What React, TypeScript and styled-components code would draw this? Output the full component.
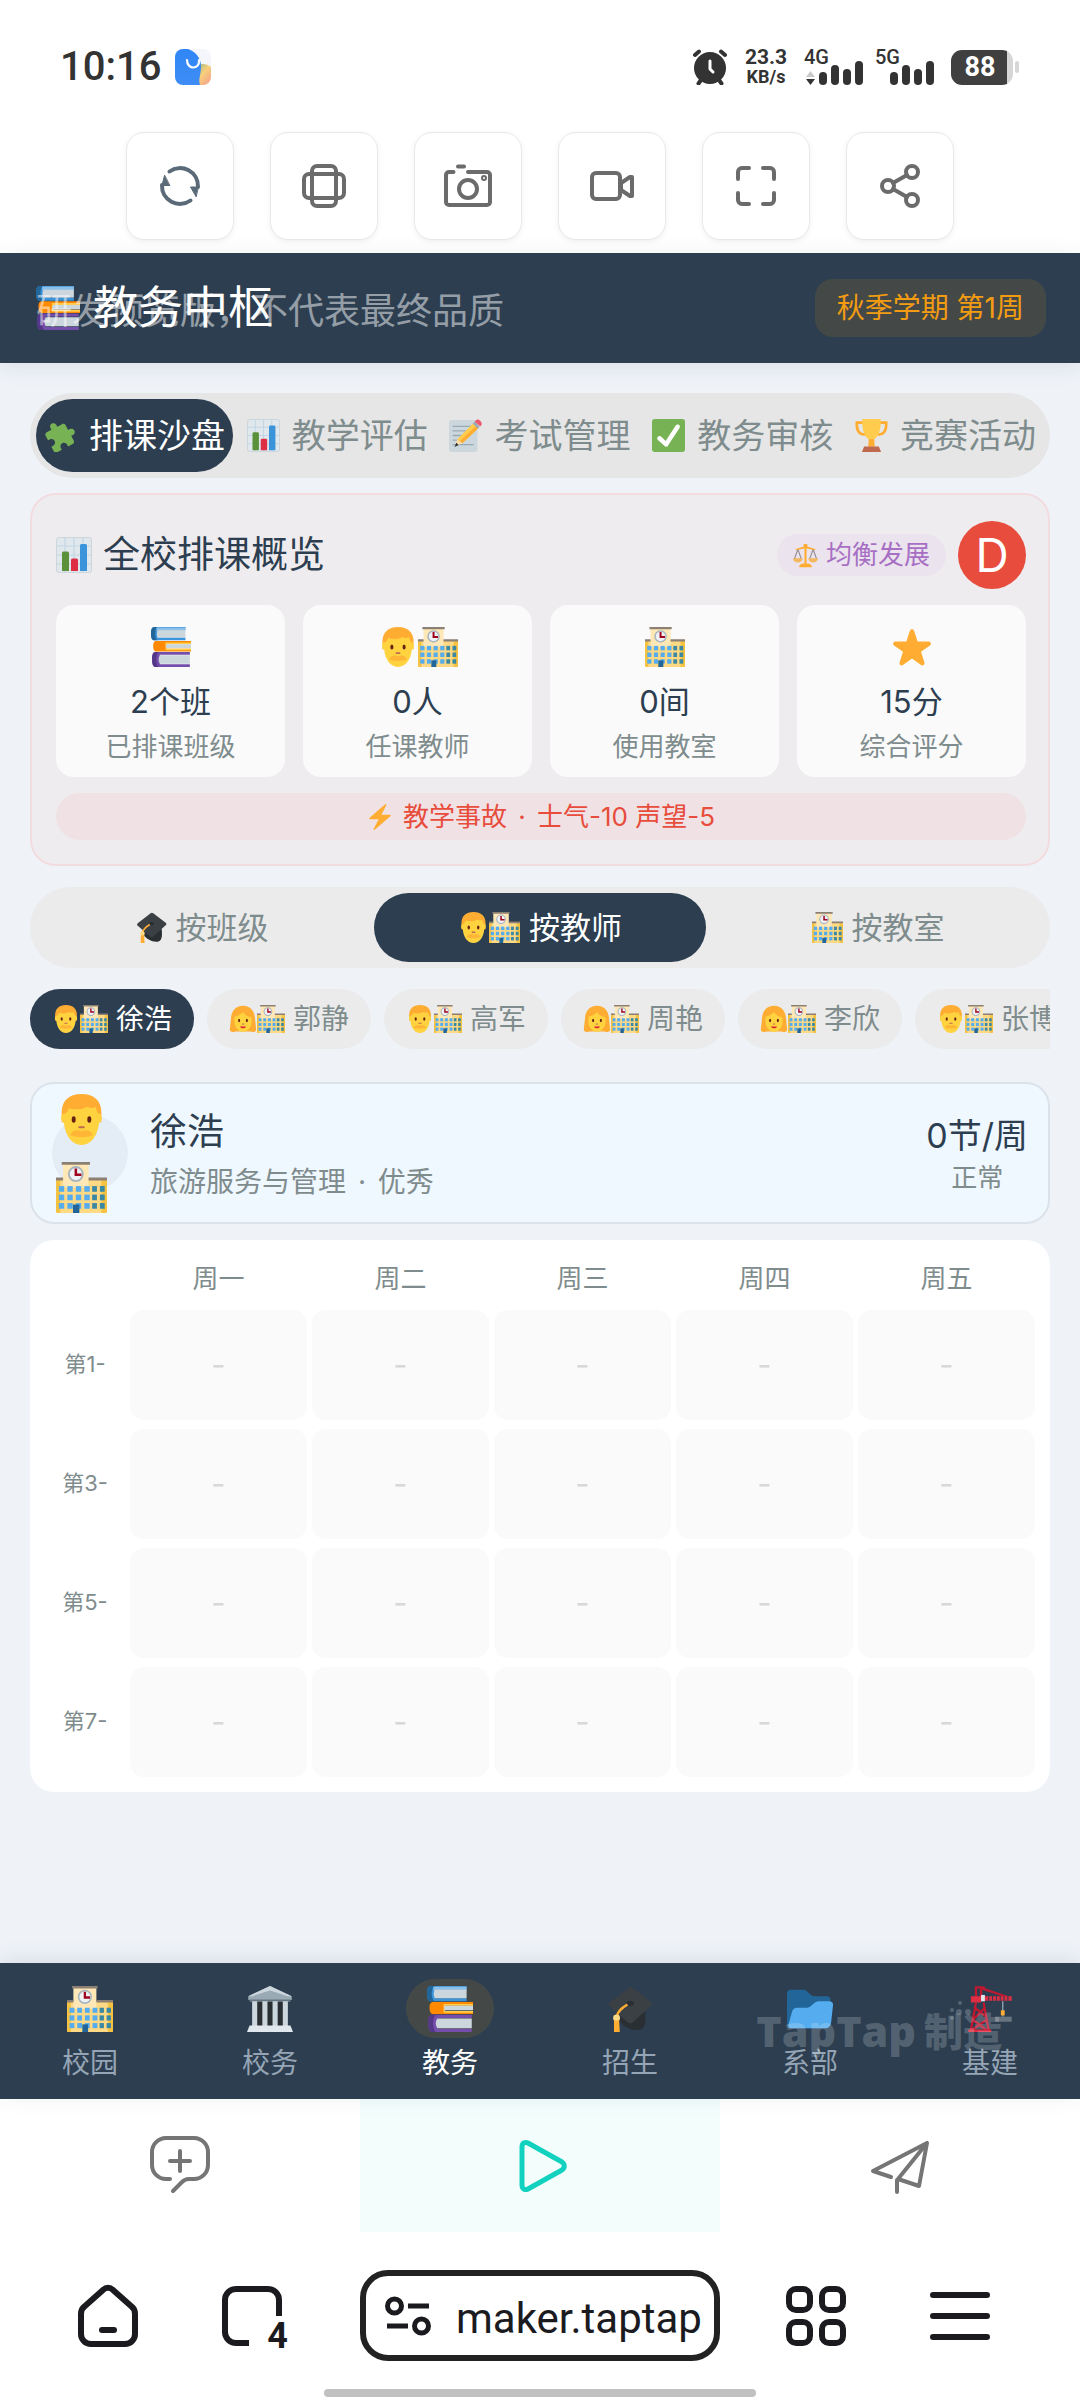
import React from "react";
import styled, { createGlobalStyle } from "styled-components";

const ink = "#2c3e50";
const muted = "#7f8c8d";
const danger = "#e74c3c";

const GlobalStyle = createGlobalStyle`
  *, *::before, *::after { box-sizing: border-box; }
  html, body { margin: 0; background: #fff; }
  body {
    font-family: Inter, "Noto Sans CJK SC", sans-serif;
    color: ${ink};
  }
  button {
    font: inherit;
    color: inherit;
    border: 0;
    padding: 0;
    background: none;
    cursor: pointer;
    white-space: nowrap;
  }
  h1, h2, h3, p { margin: 0; font-weight: inherit; }
  svg { display: block; flex: none; }
`;

/* ---------- pictograms ---------- */

const School = () => (
  <>
    <path fill="#ffd983" d="M0 12h36v23a1 1 0 0 1-1 1H1a1 1 0 0 1-1-1z" />
    <path fill="#f5c242" d="M0 12h3v24H1a1 1 0 0 1-1-1zM32 12h4v23a1 1 0 0 1-1 1h-3z" />
    <path fill="#ffe8b6" d="M5 1h18v17H5z" />
    <path fill="#8c7f73" d="M4 0h20v2H4zM0 11h5v2H0zM23 11h13v2H23z" />
    <circle cx="14" cy="8.500" r="5.600" fill="#a7b4bf" />
    <circle cx="14" cy="8.500" r="4.300" fill="#eef2f5" />
    <path fill="none" stroke="#a0041e" strokeWidth="1.800" d="M14 4.500v4.500h4" />
    {[17, 23, 29].map((y) => (
      <g key={y}>
        {[2, 8, 14, 20].map((x) => (
          <path key={x} fill="#55acee" d={`M${x} ${y}h3.800v4h-3.800z`} />
        ))}
        {[25.5, 31].map((x) => (
          <path key={x} fill="#3b88a3" d={`M${x} ${y}h3.400v4h-3.400z`} />
        ))}
      </g>
    ))}
    <path fill="#226699" d="M12 30h4.500v6H12z" />
  </>
);

const Man = () => (
  <>
    <path fill="#ffac33" d="M18 0C9 0 4 5 4 13v7h28v-7C32 5 27 0 18 0z" />
    <path fill="#ffd340" d="M5 14c-1.700 1-2 5 .6 6.500C6.500 29 11 36 18 36s11.500-7 12.400-15.500C33 19 32.700 15 31 14c-2 0-2.500-3-3-5-2 1.500-4 1-6 0-4 2.500-9 2-13 1-.5 2-1.500 4-4 4z" />
    <path fill="#ffb636" d="M10 29c1-3 5-4.500 8-2.500 3-2 7-.5 8 2.500-3 2-13 2-16 0z" />
    <ellipse cx="12.500" cy="18" rx="1.400" ry="2.300" fill="#662113" />
    <ellipse cx="23.500" cy="18" rx="1.400" ry="2.300" fill="#662113" />
    <path fill="none" stroke="#c1694f" strokeWidth="1.500" strokeLinecap="round" d="M16.500 23.500h3" />
  </>
);

const Woman = () => (
  <>
    <path fill="#ffac33" d="M18 1C8 1 3 8 2.500 18L1 32c1 3 5 3 8 2h18c3 1 7 1 8-2l-1.500-14C33 8 28 1 18 1z" />
    <path fill="#ffd340" d="M18 9c-2 3-7 5-11 6v6c0 8 5 13.500 11 13.500S29 29 29 21v-5c-5-1-9-3-11-7z" />
    <ellipse cx="13" cy="20" rx="1.300" ry="2.200" fill="#662113" />
    <ellipse cx="23" cy="20" rx="1.300" ry="2.200" fill="#662113" />
    <path fill="none" stroke="#c1694f" strokeWidth="1.200" strokeLinecap="round" d="M17 24.500h2" />
    <path fill="#df1f32" d="M14 27.500h8c-1 3-7 3-8 0z" />
  </>
);

const Books = () => (
  <>
    <path fill="#3b94d9" d="M3 0h28v2.500H6v7h25V12H3C.5 12 0 9 0 6s.5-6 3-6z" />
    <path fill="#226699" d="M3 0h3C3 1 3 11 6 12H3C.5 12 0 9 0 6s.5-6 3-6z" />
    <path fill="#8bbfe8" d="M5 .5h26v3H5z" />
    <path fill="#ccd6dd" d="M6 3h25v6.500H6C5 8 5 5 6 3z" />
    <path fill="#ff8a00" d="M5 12.500h31V15H14v4.500h22V22H5c-2.500 0-3-2.500-3-5s.5-4.500 3-4.500z" />
    <path fill="#ffcc4d" d="M13 14h23v1.500H14v4h22V21H13z" />
    <path fill="#ccd6dd" d="M14 15.500h22V19H14c-1-1-1-2.500 0-3.500z" />
    <path fill="#744eaa" d="M4 22.500h31V25H8v8.500h27V36H4c-2.500 0-3-3.500-3-7s.5-6.500 3-6.500z" />
    <path fill="#553788" d="M4 22.500h3c-3 2-3 11.500 0 13.500H4c-2.500 0-3-3.500-3-7s.5-6.500 3-6.500z" />
    <path fill="#ccd6dd" d="M8 25.500h27v7.500H8c-1.500-2-1.500-5.500 0-7.500z" />
  </>
);

const Chart = () => (
  <>
    <rect width="36" height="36" rx="3.500" fill="#ccd6dd" />
    <rect x="1" y="1" width="34" height="34" rx="2.500" fill="#e1e8ed" />
    <path stroke="#c2d6e4" strokeWidth="1.200" d="M1 9h34M1 18h34M1 27h34M9 1v34M18 1v34M27 1v34" />
    <path fill="#5c913b" d="M6 16a1.500 1.500 0 0 1 1.500-1.500h4A1.500 1.500 0 0 1 13 16v18H6z" />
    <path fill="#dd2e44" d="M15 23a1.500 1.500 0 0 1 1.500-1.500h4A1.500 1.500 0 0 1 22 23v11h-7z" />
    <path fill="#3b94d9" d="M24 8.500A1.500 1.500 0 0 1 25.500 7h4A1.500 1.500 0 0 1 31 8.500V34h-7z" />
  </>
);

const Memo = () => (
  <>
    <rect y="1" width="31" height="35" rx="3" fill="#ccd6dd" />
    <path stroke="#99aab5" strokeWidth="1.500" d="M4 8h20M4 13h17M4 18h14M4 23h9M4 28h23" />
    <path fill="#ffcc4d" d="M26.500 4.500 32 10 14.500 26.500 9 22z" />
    <path fill="#ffac33" d="M29.500 7.500 32 10 14.500 26.500 12 24z" />
    <path fill="#99aab5" d="m26 5 2-2 5.500 5.500-2 2z" />
    <path fill="#ea596e" d="M28 3c2-3 4-3 6-1s2.500 4 0 6z" />
    <path fill="#ffdca3" d="m9 22 5.500 4.500L7 29.500z" />
    <path fill="#292f33" d="m8 26 2.500 2.300L6 30.500z" />
  </>
);

const Check = () => (
  <>
    <rect width="36" height="36" rx="3" fill="#77b255" />
    <path
      fill="#fff"
      d="M29.280 6.362c-1.156-.751-2.704-.422-3.458.736L14.936 23.877l-5.029-4.650c-1.014-.938-2.596-.875-3.533.138-.937 1.014-.875 2.596.139 3.533l7.209 6.666c.48.445 1.090.665 1.696.665.673 0 1.534-.282 2.099-1.139.332-.506 12.500-19.270 12.500-19.270.751-1.159.421-2.707-.737-3.458z"
    />
  </>
);

const Trophy = () => (
  <>
    <path fill="none" stroke="#ffac33" strokeWidth="3" d="M9 4H2c-.5 8 2 13 9 13M27 4h7c.5 8-2 13-9 13" />
    <path fill="#ffcc4d" d="M8 0h20c1 12-3 20-7.500 22.500L21 30h-6l.5-7.500C11 20 7 12 8 0z" />
    <path fill="#ffac33" d="M15 22h6l.5 8h-7z" />
    <path fill="#c1694f" d="M10 30h16l2.500 6h-21z" />
  </>
);

const Puzzle = () => (
  <path
    fill="#77b255"
    transform="translate(18 18) rotate(-28) scale(1.450) translate(-12 -12)"
    d="M20.500 11H19V7c0-1.100-.9-2-2-2h-4V3.500C13 2.120 11.880 1 10.500 1S8 2.120 8 3.500V5H4c-1.100 0-1.990.9-1.990 2v3.800H3.500c1.490 0 2.700 1.210 2.700 2.700s-1.210 2.700-2.700 2.700H2V20c0 1.100.9 2 2 2h3.800v-1.500c0-1.490 1.210-2.700 2.700-2.700 1.490 0 2.700 1.210 2.700 2.700V22H17c1.100 0 2-.9 2-2v-4h1.500c1.380 0 2.500-1.120 2.500-2.500S21.880 11 20.500 11z"
  />
);

const Scale = () => (
  <>
    <path fill="none" stroke="#8f8a94" strokeWidth="1.500" d="M7 9 2 23M7 9l5 14M29 9l-5 14M29 9l5 14" />
    <path fill="#ffac33" d="M16.500 3h3v28h-3zM4 8.500 16 5h4l12 3.500v2L20 8h-4L4 10.500zM9 33c1-3 5-4 9-4s8 1 9 4v2H9z" />
    <circle cx="18" cy="4" r="3" fill="#ffac33" />
    <path fill="#f4b860" d="M0 22h14c0 4-3 6-7 6s-7-2-7-6zM22 22h14c0 4-3 6-7 6s-7-2-7-6z" />
  </>
);

const Star = () => (
  <path
    fill="#ffac33"
    d="M27.287 34.627c-.404 0-.806-.124-1.152-.371L18 28.422l-8.135 5.834c-.343.247-.745.371-1.148.371-.404 0-.809-.124-1.154-.373-.693-.499-.982-1.386-.721-2.194l3.034-9.792-8.062-5.681c-.685-.505-.97-1.393-.708-2.203.264-.809 1.016-1.357 1.866-1.363L12.947 13l3.179-9.549c.268-.809 1.023-1.353 1.874-1.353.851 0 1.606.545 1.875 1.353L23 13l10.036.021c.853.006 1.606.554 1.867 1.363.263.81-.022 1.698-.708 2.203l-8.062 5.681 3.034 9.792c.26.809-.028 1.695-.721 2.194-.346.249-.749.373-1.154.373z"
  />
);

const Bolt = () => (
  <path
    fill="#ffac33"
    d="M32.938 15.651C32.792 15.260 32.418 15 32 15H19.925L26.890 1.458c.219-.426.106-.947-.271-1.243C26.437.071 26.218 0 26 0c-.233 0-.466.082-.653.243L18 6.588 3.347 19.243c-.316.273-.43.714-.284 1.105S3.582 21 4 21h12.075L9.110 34.542c-.219.426-.106.947.271 1.243.182.144.401.215.619.215.233 0 .466-.082.653-.243L18 29.412l14.653-12.655c.317-.273.43-.714.285-1.106z"
  />
);

const Cap = () => (
  <>
    <path fill="#292f33" d="M9 18v8c2 6 15 11 19 7 3-3 2-9 2-13z" />
    <path fill="#3b4045" d="M17 1.500c.8-.8 2-.8 3 0l14.500 11c1 .8 1 2 0 3L20 28.500c-1 .9-2.500.9-3.500 0L2 16c-1-1-1-2 0-3z" />
    <ellipse cx="18" cy="13.500" rx="3" ry="2" fill="#292f33" />
    <path fill="none" stroke="#ffac33" strokeWidth="1.800" d="M16 14.500c-5 3-8 5.500-8.500 10" />
    <circle cx="7.500" cy="25" r="2.700" fill="#ffd983" />
    <path fill="#ffac33" d="M5.500 27h4l.5 9H5.500z" />
  </>
);

const Hall = () => (
  <>
    <path fill="#292f33" d="M4 12h28v20H4z" />
    <path fill="#9aaab4" d="M18 0 35 8v3H1V8z" />
    <path fill="#ccd6dd" d="M18 0 35 8h-3L18 3.500 4 8H1z" />
    <path fill="#66757f" d="M2 10.500h32v2H2z" />
    <path fill="#ccd6dd" d="M4 12h4v20H4zM12 12h4v20h-4zM20 12h4v20h-4zM28 12h4v20h-4z" />
    <path fill="#e1e8ed" d="M2 31h32l2 5H0z" />
  </>
);

const Folder = () => (
  <>
    <path fill="#226699" d="M0 6c0-2 1-3 3-3h10c3 0 5 5 8 5h10c2 0 3 1 3 3v18c0 2-1 4-3 4H2c-1 0-2-1-2-3z" />
    <path fill="#55acee" d="M4 20c.3-2 2-3 4-3h8c3 0 5-5 9-5h8c2 0 3.200 1 3 3l-1.500 14c-.3 2-2 4-4 4H3c-2 0-2-1-1.800-3z" />
  </>
);

const Crane = () => (
  <>
    <path fill="none" stroke="#be1931" strokeWidth="1.800" d="M7 13 3 35M13 13l4 22M6 17l9 7M14 17 5 26M4 26l12 9M16 26 3 35M8 1h6M7 9V1h4v9M12 2l21 7" />
    <path fill="#dd2e44" d="M3 8h8v5H3zM13 8h22v3.500H13zM1 34h18v2H1z" />
    <path stroke="#2c3e50" strokeWidth=".8" d="M17 8v3.500M20 8v3.500M23 8v3.500M26 8v3.500M29 8v3.500M32 8v3.500" />
    <path fill="#e1e8ed" d="M11 7h3v5h-3z" />
    <path stroke="#99aab5" d="M28 12v12" />
    <path fill="#ffac33" d="M26.500 19h3v4h-3z" />
    <path fill="#66757f" d="M22 24h13v4H22z" />
  </>
);

const pictures = {
  school: School,
  man: Man,
  woman: Woman,
  books: Books,
  chart: Chart,
  memo: Memo,
  check: Check,
  trophy: Trophy,
  puzzle: Puzzle,
  scale: Scale,
  star: Star,
  bolt: Bolt,
  cap: Cap,
  hall: Hall,
  folder: Folder,
  crane: Crane,
};

type PictureName = keyof typeof pictures;

const Picture = ({ name, size }: { name: PictureName; size: number }) => {
  const Shape = pictures[name];
  return (
    <svg width={size} height={size} viewBox="0 0 36 36" aria-hidden="true">
      <Shape />
    </svg>
  );
};

const PictureRow = styled.span`
  display: flex;
  align-items: center;
`;

const Pictures = ({ names, size }: { names: PictureName[]; size: number }) => (
  <PictureRow>
    {names.map((n) => (
      <Picture key={n} name={n} size={size} />
    ))}
  </PictureRow>
);

/* ---------- status bar ---------- */

const Page = styled.div`
  min-height: 100vh;
  display: flex;
  flex-direction: column;
`;

const StatusBar = styled.div`
  height: 132px;
  padding: 2px 61px 0 60px;
  display: flex;
  align-items: center;
  justify-content: space-between;
  font-family: Roboto, sans-serif;
  color: #333;
`;

const StatusGroup = styled.div<{ $gap: number }>`
  display: flex;
  align-items: center;
  gap: ${(p) => p.$gap}px;
`;

const Clock = styled.span`
  font-size: 40px;
  line-height: 48px;
  font-weight: 500;
`;

const NetSpeed = styled.span`
  width: 44px;
  display: flex;
  flex-direction: column;
  align-items: center;
  font-size: 21px;
  line-height: 20px;
  font-weight: 700;
`;

const SpeedUnit = styled.span`
  font-size: 18px;
`;

const Signal = styled.span`
  position: relative;
  display: block;
`;

const SignalLabel = styled.span`
  position: absolute;
  left: 0;
  top: -3px;
  font-size: 20px;
  line-height: 20px;
  font-weight: 500;
`;

const Battery = styled.span`
  display: flex;
  align-items: center;
  gap: 2px;
`;

const BatteryBody = styled.span`
  width: 62px;
  height: 35px;
  padding-right: 4px;
  border-radius: 11px;
  background: linear-gradient(90deg, #404040 56px, #d6d6d6 56px);
  color: #fff;
  font-size: 27px;
  line-height: 34px;
  font-weight: 700;
  text-align: center;
`;

const BatteryTip = styled.span`
  width: 4px;
  height: 12px;
  border-radius: 2px;
  background: #d6d6d6;
`;

const SignalBars = ({ label, arrows }: { label: string; arrows?: boolean }) => (
  <Signal>
    <SignalLabel>{label}</SignalLabel>
    <svg width="60" height="35" viewBox="0 0 60 35" fill="#333" aria-hidden="true">
      {arrows && (
        <>
          <path fill="#c9c9c9" d="M2 27h9l-4.500-6z" />
          <path d="M2 29h9l-4.500 6z" />
        </>
      )}
      <rect x="15" y="22" width="8" height="13" rx="4" />
      <rect x="27" y="15" width="8" height="20" rx="4" />
      <rect x="39" y="19" width="8" height="16" rx="4" />
      <rect x="51" y="11" width="8" height="24" rx="4" />
    </svg>
  </Signal>
);

/* ---------- tool row ---------- */

const ToolRow = styled.div`
  display: flex;
  justify-content: center;
  gap: 36px;
  padding-bottom: 13px;
`;

const ToolButton = styled.button`
  width: 108px;
  height: 108px;
  display: grid;
  place-items: center;
  border: 1px solid #e9e9e9;
  border-radius: 18px;
  background: #fff;
  box-shadow: 0 2px 6px rgba(0, 0, 0, 0.06);
`;

const Stroke = ({ size = 48, color = "#6b6b6b", width = 4, children }: { size?: number; color?: string; width?: number; children: React.ReactNode }) => (
  <svg
    width={size}
    height={size}
    viewBox={`0 0 ${size} ${size}`}
    fill="none"
    stroke={color}
    strokeWidth={width}
    strokeLinecap="round"
    strokeLinejoin="round"
    aria-hidden="true"
  >
    {children}
  </svg>
);

const tools: { label: string; icon: React.ReactNode }[] = [
  {
    label: "刷新",
    icon: (
      <Stroke color="#5a6a78">
        <path d="M13.500 9.500A18 18 0 0 1 42 25M34.500 38.500A18 18 0 0 1 6 23" />
        <path fill="#5a6a78" strokeWidth="1" d="M8.500 13.500 6 23.500h7.500zM40 34.500l-5.500-9.500H42z" />
      </Stroke>
    ),
  },
  {
    label: "旋转屏幕",
    icon: (
      <Stroke>
        <rect x="12" y="4" width="24" height="40" rx="5" />
        <rect x="4" y="12" width="40" height="24" rx="5" />
      </Stroke>
    ),
  },
  {
    label: "截图",
    icon: (
      <Stroke>
        <path d="M9.500 10H5a3 3 0 0 0-3 3v27a3 3 0 0 0 3 3h38a3 3 0 0 0 3-3V13a3 3 0 0 0-3-3H24M14 4.500h6" />
        <circle cx="24" cy="27" r="9" />
        <circle cx="40" cy="16" r="1" />
      </Stroke>
    ),
  },
  {
    label: "录屏",
    icon: (
      <Stroke>
        <rect x="4" y="11" width="28" height="26" rx="4" />
        <path d="m33 21 9-6h2v19h-2l-9-6z" />
      </Stroke>
    ),
  },
  {
    label: "全屏",
    icon: (
      <Stroke>
        <path d="M6 17v-7a4 4 0 0 1 4-4h7M31 6h7a4 4 0 0 1 4 4v7M42 31v7a4 4 0 0 1-4 4h-7M17 42h-7a4 4 0 0 1-4-4v-7" />
      </Stroke>
    ),
  },
  {
    label: "分享",
    icon: (
      <Stroke>
        <circle cx="12" cy="24" r="6" />
        <circle cx="36" cy="10" r="6" />
        <circle cx="36" cy="38" r="6" />
        <path d="m17 21 14-8M17 27l14 8" />
      </Stroke>
    ),
  },
];

/* ---------- game header ---------- */

const Header = styled.header`
  position: relative;
  z-index: 1;
  height: 110px;
  padding: 0 34px 0 36px;
  display: flex;
  align-items: center;
  justify-content: space-between;
  background: ${ink};
  box-shadow: 0 4px 20px rgba(44, 62, 80, 0.1);
`;

const HeaderTitle = styled.h1`
  display: flex;
  align-items: center;
  gap: 13px;
  font-size: 45px;
  line-height: 56px;
  color: #fff;
`;

const PreviewNotice = styled.p`
  position: absolute;
  left: 36px;
  top: 34px;
  font-size: 36px;
  line-height: 48px;
  color: rgba(255, 255, 255, 0.5);
  white-space: nowrap;
  pointer-events: none;
`;

const TermPill = styled.span`
  padding: 10px 22px;
  border-radius: 18px;
  background: rgba(243, 156, 18, 0.12);
  color: #f39c12;
  font-size: 28px;
  line-height: 38px;
`;

/* ---------- main panels ---------- */

const Main = styled.main`
  flex: 1;
  padding: 30px 30px 60px;
  background: #eff3f8;
`;

const TabBar = styled.div`
  display: flex;
  gap: 6px;
  padding: 6px;
  margin-bottom: 15px;
  border-radius: 43px;
  background: #e6e6e6;
`;

const Tab = styled.button<{ $active?: boolean }>`
  flex: 1;
  min-width: 0;
  height: 73px;
  display: flex;
  align-items: center;
  justify-content: center;
  gap: 12px;
  border-radius: 37px;
  font-size: 34px;
  line-height: 44px;
  background: ${(p) => (p.$active ? ink : "transparent")};
  color: ${(p) => (p.$active ? "#fff" : muted)};
`;

const Overview = styled.section`
  display: flex;
  flex-direction: column;
  gap: 16px;
  padding: 26px 22px 24px 24px;
  margin-bottom: 21px;
  border: 2px solid #f2dcdf;
  border-radius: 26px;
  background: #efecef;
`;

const OverviewHead = styled.div`
  display: flex;
  align-items: center;
  gap: 12px;
`;

const OverviewTitle = styled.h2`
  flex: 1;
  display: flex;
  align-items: center;
  gap: 11px;
  font-size: 37px;
  line-height: 48px;
`;

const ModeBadge = styled.span`
  display: flex;
  align-items: center;
  gap: 8px;
  padding: 2px 16px;
  border-radius: 21px;
  background: #ebe3ed;
  color: #a76fc4;
  font-size: 26px;
  line-height: 38px;
`;

const Grade = styled.span`
  width: 68px;
  height: 68px;
  border-radius: 50%;
  background: ${danger};
  color: #fff;
  font-size: 46px;
  line-height: 68px;
  text-align: center;
`;

const StatGrid = styled.div`
  display: grid;
  grid-template-columns: repeat(4, 1fr);
  gap: 18px;
`;

const StatCard = styled.div`
  display: flex;
  flex-direction: column;
  align-items: center;
  gap: 8px;
  padding: 22px 0 16px;
  border-radius: 18px;
  background: #fafafa;
`;

const StatValue = styled.span`
  padding-top: 4px;
  font-size: 31px;
  line-height: 46px;
`;

const StatLabel = styled.span`
  font-size: 26px;
  line-height: 28px;
  color: ${muted};
`;

const Alert = styled.p`
  display: flex;
  align-items: center;
  justify-content: center;
  gap: 10px;
  border-radius: 24px;
  background: #f0e2e4;
  color: ${danger};
  font-size: 26px;
  line-height: 47px;
`;

const Dot = styled.span`
  margin: 0 4px;
`;

const Segments = styled.div`
  display: flex;
  gap: 6px;
  padding: 6px;
  margin-bottom: 21px;
  border-radius: 40px;
  background: #ebebeb;
`;

const Segment = styled.button<{ $active?: boolean }>`
  flex: 1;
  height: 69px;
  display: flex;
  align-items: center;
  justify-content: center;
  gap: 9px;
  border-radius: 35px;
  font-size: 31px;
  line-height: 40px;
  background: ${(p) => (p.$active ? ink : "transparent")};
  color: ${(p) => (p.$active ? "#fff" : muted)};
`;

const Chips = styled.div`
  display: flex;
  gap: 13px;
  margin-bottom: 33px;
  overflow: hidden;
`;

const Chip = styled.button<{ $active?: boolean }>`
  flex: none;
  height: 60px;
  padding: 0 22px;
  display: flex;
  align-items: center;
  gap: 8px;
  border-radius: 30px;
  font-size: 28px;
  line-height: 36px;
  background: ${(p) => (p.$active ? ink : "#ebebeb")};
  color: ${(p) => (p.$active ? "#fff" : muted)};
`;

const TeacherCard = styled.section`
  display: flex;
  align-items: center;
  gap: 22px;
  height: 142px;
  padding: 0 20px;
  margin-bottom: 16px;
  border: 2px solid #dbe2ea;
  border-radius: 24px;
  background: #eff7ff;
`;

const Avatar = styled.div`
  width: 76px;
  height: 76px;
  padding-left: 4px;
  display: flex;
  flex-direction: column;
  align-items: flex-start;
  justify-content: center;
  gap: 17px;
  border-radius: 50%;
  background: #e4edf5;
`;

const TeacherInfo = styled.div`
  flex: 1;
  padding-top: 4px;
`;

const TeacherName = styled.h3`
  font-size: 37px;
  line-height: 54px;
`;

const TeacherNote = styled.p`
  font-size: 28px;
  line-height: 46px;
  color: ${muted};
`;

const Workload = styled.div`
  padding-top: 4px;
  text-align: center;
`;

const WorkloadValue = styled.p`
  font-size: 34px;
  line-height: 46px;
`;

const WorkloadState = styled.p`
  font-size: 26px;
  line-height: 38px;
  color: ${muted};
`;

const TimetableCard = styled.section`
  padding: 6px 10px;
  border-radius: 24px;
  background: #fff;
`;

const Timetable = styled.table`
  width: 100%;
  table-layout: fixed;
  border-collapse: separate;
  border-spacing: 5px 9px;
  color: ${muted};
`;

const DayHead = styled.th`
  height: 46px;
  padding: 2px 0 0;
  font-weight: 400;
  font-size: 26px;
  line-height: 36px;
`;

const CornerHead = styled.td`
  width: 80px;
  padding: 0;
`;

const PeriodHead = styled.th`
  padding: 0 0 2px;
  font-weight: 400;
  font-size: 22px;
  line-height: 30px;
`;

const Slot = styled.td`
  height: 110px;
  padding: 0;
  border-radius: 14px;
  background: #fafafa;
  color: #d8d8d8;
  font-size: 31px;
  line-height: 30px;
  text-align: center;
`;

/* ---------- game navigation ---------- */

const GameNav = styled.nav`
  position: relative;
  height: 136px;
  display: grid;
  grid-template-columns: repeat(6, 1fr);
  background: ${ink};
  box-shadow: 0 -4px 20px rgba(44, 62, 80, 0.1);
`;

const GameNavItem = styled.button<{ $active?: boolean }>`
  display: flex;
  flex-direction: column;
  align-items: center;
  gap: 6px;
  padding-top: 16px;
  font-size: 28px;
  line-height: 38px;
  color: ${(p) => (p.$active ? "#fff" : "#95a5b5")};
`;

const GameNavIcon = styled.span<{ $active?: boolean }>`
  width: 88px;
  height: 59px;
  display: grid;
  place-items: center;
  border-radius: 30px;
  background: ${(p) => (p.$active ? "rgba(243, 156, 18, 0.12)" : "transparent")};
`;

const Watermark = styled.div`
  position: absolute;
  right: 78px;
  top: 41px;
  display: flex;
  align-items: center;
  gap: 8px;
  color: rgba(255, 255, 255, 0.2);
  font-family: "Open Sans", "Noto Sans CJK SC", sans-serif;
  font-weight: 800;
  font-size: 43px;
  line-height: 54px;
  pointer-events: none;
`;

const WatermarkSuffix = styled.span`
  position: relative;
  font-size: 39px;
`;

const Sparkle = styled.svg`
  position: absolute;
  left: 24px;
  top: -4px;
`;

/* ---------- maker actions and browser bar ---------- */

const ActionBar = styled.div`
  height: 133px;
  display: grid;
  grid-template-columns: repeat(3, 1fr);
`;

const ActionButton = styled.button<{ $active?: boolean }>`
  display: grid;
  place-items: center;
  background: ${(p) => (p.$active ? "#f2fdfc" : "transparent")};
`;

const BrowserBar = styled.div`
  position: relative;
  height: 168px;
  padding-top: 38px;
  display: grid;
  grid-template-columns: repeat(3, minmax(0, 1fr));
  align-items: start;
`;

const BrowserSide = styled.div<{ $inset?: number }>`
  height: 91px;
  padding-right: ${(p) => p.$inset || 0}px;
  display: flex;
  align-items: center;
  justify-content: center;
  gap: 72px;
`;

const BrowserButton = styled.button`
  position: relative;
  width: 72px;
  height: 72px;
  display: grid;
  place-items: center;
`;

const TabCount = styled.span`
  position: absolute;
  right: 0;
  bottom: -2px;
  font-family: Roboto, sans-serif;
  font-weight: 700;
  font-size: 36px;
  line-height: 36px;
  color: #1b1b1f;
`;

const AddressBox = styled.label`
  height: 91px;
  display: flex;
  align-items: center;
  gap: 25px;
  padding: 0 6px 0 19px;
  border: 6px solid #222;
  border-radius: 28px;
`;

const AddressInput = styled.input`
  flex: 1;
  min-width: 0;
  height: 60px;
  padding: 6px 0 0;
  border: 0;
  outline: 0;
  background: none;
  font-family: Roboto, sans-serif;
  font-size: 42px;
  color: #1b1b1f;
`;

const HomeIndicator = styled.div`
  position: absolute;
  left: 30%;
  right: 30%;
  bottom: 3px;
  height: 8px;
  border-radius: 4px;
  background: #c1c1c1;
`;

/* ---------- data ---------- */

const tabs: [PictureName, string][] = [
  ["puzzle", "排课沙盘"],
  ["chart", "教学评估"],
  ["memo", "考试管理"],
  ["check", "教务审核"],
  ["trophy", "竞赛活动"],
];

const stats: [PictureName[], string, string][] = [
  [["books"], "2个班", "已排课班级"],
  [["man", "school"], "0人", "任课教师"],
  [["school"], "0间", "使用教室"],
  [["star"], "15分", "综合评分"],
];

const views: [PictureName[], string][] = [
  [["cap"], "按班级"],
  [["man", "school"], "按教师"],
  [["school"], "按教室"],
];

const teachers: [PictureName, string][] = [
  ["man", "徐浩"],
  ["woman", "郭静"],
  ["man", "高军"],
  ["woman", "周艳"],
  ["woman", "李欣"],
  ["man", "张博"],
];

const days = ["周一", "周二", "周三", "周四", "周五"];
const periods = ["第1-", "第3-", "第5-", "第7-"];

const sections: [PictureName, string][] = [
  ["school", "校园"],
  ["hall", "校务"],
  ["books", "教务"],
  ["cap", "招生"],
  ["folder", "系部"],
  ["crane", "基建"],
];

export default function App() {
  return (
    <Page>
      <GlobalStyle />
      <StatusBar>
        <StatusGroup $gap={14}>
          <Clock>10:16</Clock>
          <svg width="36" height="36" viewBox="0 0 36 36" aria-hidden="true">
            <defs>
              <linearGradient id="app-blue" x1="0" y1="0" x2="0" y2="1">
                <stop offset="0" stopColor="#2f86f6" />
                <stop offset="1" stopColor="#3f8df5" />
              </linearGradient>
              <linearGradient id="app-warm" x1="0" y1="0" x2="1" y2="1">
                <stop offset="0" stopColor="#7db38d" />
                <stop offset=".5" stopColor="#f8d07a" />
                <stop offset="1" stopColor="#f59b8d" />
              </linearGradient>
              <clipPath id="app-clip">
                <rect width="36" height="36" rx="8" />
              </clipPath>
            </defs>
            <g clipPath="url(#app-clip)">
              <rect width="36" height="36" fill="#f4f6fb" />
              <path fill="url(#app-warm)" d="M18 22c3-8 12-9 18-4v18H18z" />
              <path fill="url(#app-blue)" d="M0 0h13c8 3 13 9 13 17 0 9-3 13-1 19H0z" />
            </g>
            <path fill="none" stroke="#fff" strokeWidth="2.200" strokeLinecap="round" d="M12 11c0 10 13 10 12 0" />
          </svg>
        </StatusGroup>
        <StatusGroup $gap={16}>
          <svg width="36" height="36" viewBox="0 0 36 36" aria-hidden="true">
            <circle cx="18" cy="19" r="16" fill="#333" />
            <path fill="none" stroke="#333" strokeWidth="4" strokeLinecap="round" d="m3 6 4-3.500M33 6l-4-3.500M9 31l-2.500 3.500M27 31l2.500 3.500" />
            <path fill="none" stroke="#fff" strokeWidth="3" strokeLinecap="round" strokeLinejoin="round" d="M18 12v8l3 3" />
          </svg>
          <NetSpeed>
            <span>23.3</span>
            <SpeedUnit>KB/s</SpeedUnit>
          </NetSpeed>
          <StatusGroup $gap={11}>
            <SignalBars label="4G" arrows />
            <SignalBars label="5G" />
          </StatusGroup>
          <Battery>
            <BatteryBody>88</BatteryBody>
            <BatteryTip />
          </Battery>
        </StatusGroup>
      </StatusBar>

      <ToolRow>
        {tools.map((t) => (
          <ToolButton key={t.label} type="button" aria-label={t.label}>
            {t.icon}
          </ToolButton>
        ))}
      </ToolRow>

      <Header>
        <HeaderTitle>
          <Picture name="books" size={44} />
          教务中枢
        </HeaderTitle>
        <PreviewNotice>研发预览版，不代表最终品质</PreviewNotice>
        <TermPill>秋季学期 第1周</TermPill>
      </Header>

      <Main>
        <TabBar>
          {tabs.map(([icon, label], i) => (
            <Tab key={label} type="button" $active={i === 0}>
              <Picture name={icon} size={33} />
              {label}
            </Tab>
          ))}
        </TabBar>

        <Overview>
          <OverviewHead>
            <OverviewTitle>
              <Picture name="chart" size={36} />
              全校排课概览
            </OverviewTitle>
            <ModeBadge>
              <Picture name="scale" size={25} />
              均衡发展
            </ModeBadge>
            <Grade>D</Grade>
          </OverviewHead>
          <StatGrid>
            {stats.map(([icons, value, label]) => (
              <StatCard key={label}>
                <Pictures names={icons} size={40} />
                <StatValue>{value}</StatValue>
                <StatLabel>{label}</StatLabel>
              </StatCard>
            ))}
          </StatGrid>
          <Alert>
            <Picture name="bolt" size={26} />
            <span>
              教学事故 <Dot>·</Dot> 士气-10 声望-5
            </span>
          </Alert>
        </Overview>

        <Segments>
          {views.map(([icons, label], i) => (
            <Segment key={label} type="button" $active={i === 1}>
              <Pictures names={icons} size={31} />
              {label}
            </Segment>
          ))}
        </Segments>

        <Chips>
          {teachers.map(([icon, name], i) => (
            <Chip key={name} type="button" $active={i === 0}>
              <Pictures names={[icon, "school"]} size={28} />
              {name}
            </Chip>
          ))}
        </Chips>

        <TeacherCard>
          <Avatar>
            <Picture name="man" size={51} />
            <Picture name="school" size={51} />
          </Avatar>
          <TeacherInfo>
            <TeacherName>徐浩</TeacherName>
            <TeacherNote>
              旅游服务与管理 <Dot>·</Dot> 优秀
            </TeacherNote>
          </TeacherInfo>
          <Workload>
            <WorkloadValue>0节/周</WorkloadValue>
            <WorkloadState>正常</WorkloadState>
          </Workload>
        </TeacherCard>

        <TimetableCard>
          <Timetable>
            <thead>
              <tr>
                <CornerHead />
                {days.map((d) => (
                  <DayHead key={d} scope="col">
                    {d}
                  </DayHead>
                ))}
              </tr>
            </thead>
            <tbody>
              {periods.map((p) => (
                <tr key={p}>
                  <PeriodHead scope="row">{p}</PeriodHead>
                  {days.map((d) => (
                    <Slot key={d}>-</Slot>
                  ))}
                </tr>
              ))}
            </tbody>
          </Timetable>
        </TimetableCard>
      </Main>

      <GameNav>
        {sections.map(([icon, label], i) => (
          <GameNavItem key={label} type="button" $active={i === 2}>
            <GameNavIcon $active={i === 2}>
              <Picture name={icon} size={46} />
            </GameNavIcon>
            {label}
          </GameNavItem>
        ))}
        <Watermark>
          TapTap
          <WatermarkSuffix>
            制造
            <Sparkle width="26" height="22" viewBox="0 0 26 22" fill="currentColor" aria-hidden="true">
              <circle cx="4" cy="10" r="2" />
              <circle cx="12" cy="3" r="2" />
              <circle cx="11" cy="12" r="3" />
              <circle cx="4" cy="18" r="2" />
              <circle cx="20" cy="12" r="3" />
            </Sparkle>
          </WatermarkSuffix>
        </Watermark>
      </GameNav>

      <ActionBar>
        <ActionButton type="button" aria-label="评论">
          <Stroke size={64} color="#757575">
            <path d="M22 45h-4A14 14 0 0 1 4 31V18A14 14 0 0 1 18 4h28a14 14 0 0 1 14 14v13a14 14 0 0 1-14 14h-5c-3 0-5 1-7 3l-9 9M32 17v20M22 27h20" />
          </Stroke>
        </ActionButton>
        <ActionButton type="button" aria-label="运行" $active>
          <Stroke size={64} color="#12d2bf" width={5}>
            <path d="M14 13v38c0 4 3 5.500 6 4l34-19c3-2 3-6 0-8L20 9c-3-1.500-6 0-6 4z" />
          </Stroke>
        </ActionButton>
        <ActionButton type="button" aria-label="发布">
          <Stroke size={64} color="#757575">
            <path d="M23 43 5 37 59 9l-8 43-21-7L59 9M29 46v12" />
          </Stroke>
        </ActionButton>
      </ActionBar>

      <BrowserBar>
        <BrowserSide>
          <BrowserButton type="button" aria-label="主页">
            <Stroke size={66} color="#1b1b1f" width={6}>
              <path d="M6 31c0-4 1-6 4-8L28 7c3-3 7-3 10 0l18 16c3 2 4 4 4 8v20a10 10 0 0 1-10 10H16A10 10 0 0 1 6 51zM27 47h12" />
            </Stroke>
          </BrowserButton>
          <BrowserButton type="button" aria-label="标签页">
            <svg width="66" height="66" viewBox="0 0 66 66" fill="none" stroke="#1b1b1f" strokeWidth="6" aria-hidden="true">
              <path d="M30 60H17A11 11 0 0 1 6 49V17A11 11 0 0 1 17 6h32a11 11 0 0 1 11 11v16" />
            </svg>
            <TabCount>4</TabCount>
          </BrowserButton>
        </BrowserSide>
        <AddressBox>
          <svg width="46" height="40" viewBox="0 0 46 40" fill="none" stroke="#1b1b1f" strokeWidth="5" aria-hidden="true">
            <circle cx="9.500" cy="10" r="7" />
            <path d="M23 10h21M2 30h21" />
            <circle cx="36.500" cy="30" r="7" />
          </svg>
          <AddressInput type="text" aria-label="网址" defaultValue="maker.taptap" />
        </AddressBox>
        <BrowserSide $inset={24}>
          <BrowserButton type="button" aria-label="应用">
            <svg width="66" height="66" viewBox="0 0 66 66" fill="none" stroke="#1b1b1f" strokeWidth="6" aria-hidden="true">
              <rect x="6" y="6" width="21" height="21" rx="7" />
              <rect x="39" y="6" width="21" height="21" rx="7" />
              <rect x="6" y="39" width="21" height="21" rx="7" />
              <rect x="39" y="39" width="21" height="21" rx="7" />
            </svg>
          </BrowserButton>
          <BrowserButton type="button" aria-label="菜单">
            <Stroke size={66} color="#1b1b1f" width={6}>
              <path d="M6 12h54M6 33h54M6 54h54" />
            </Stroke>
          </BrowserButton>
        </BrowserSide>
        <HomeIndicator />
      </BrowserBar>
    </Page>
  );
}
